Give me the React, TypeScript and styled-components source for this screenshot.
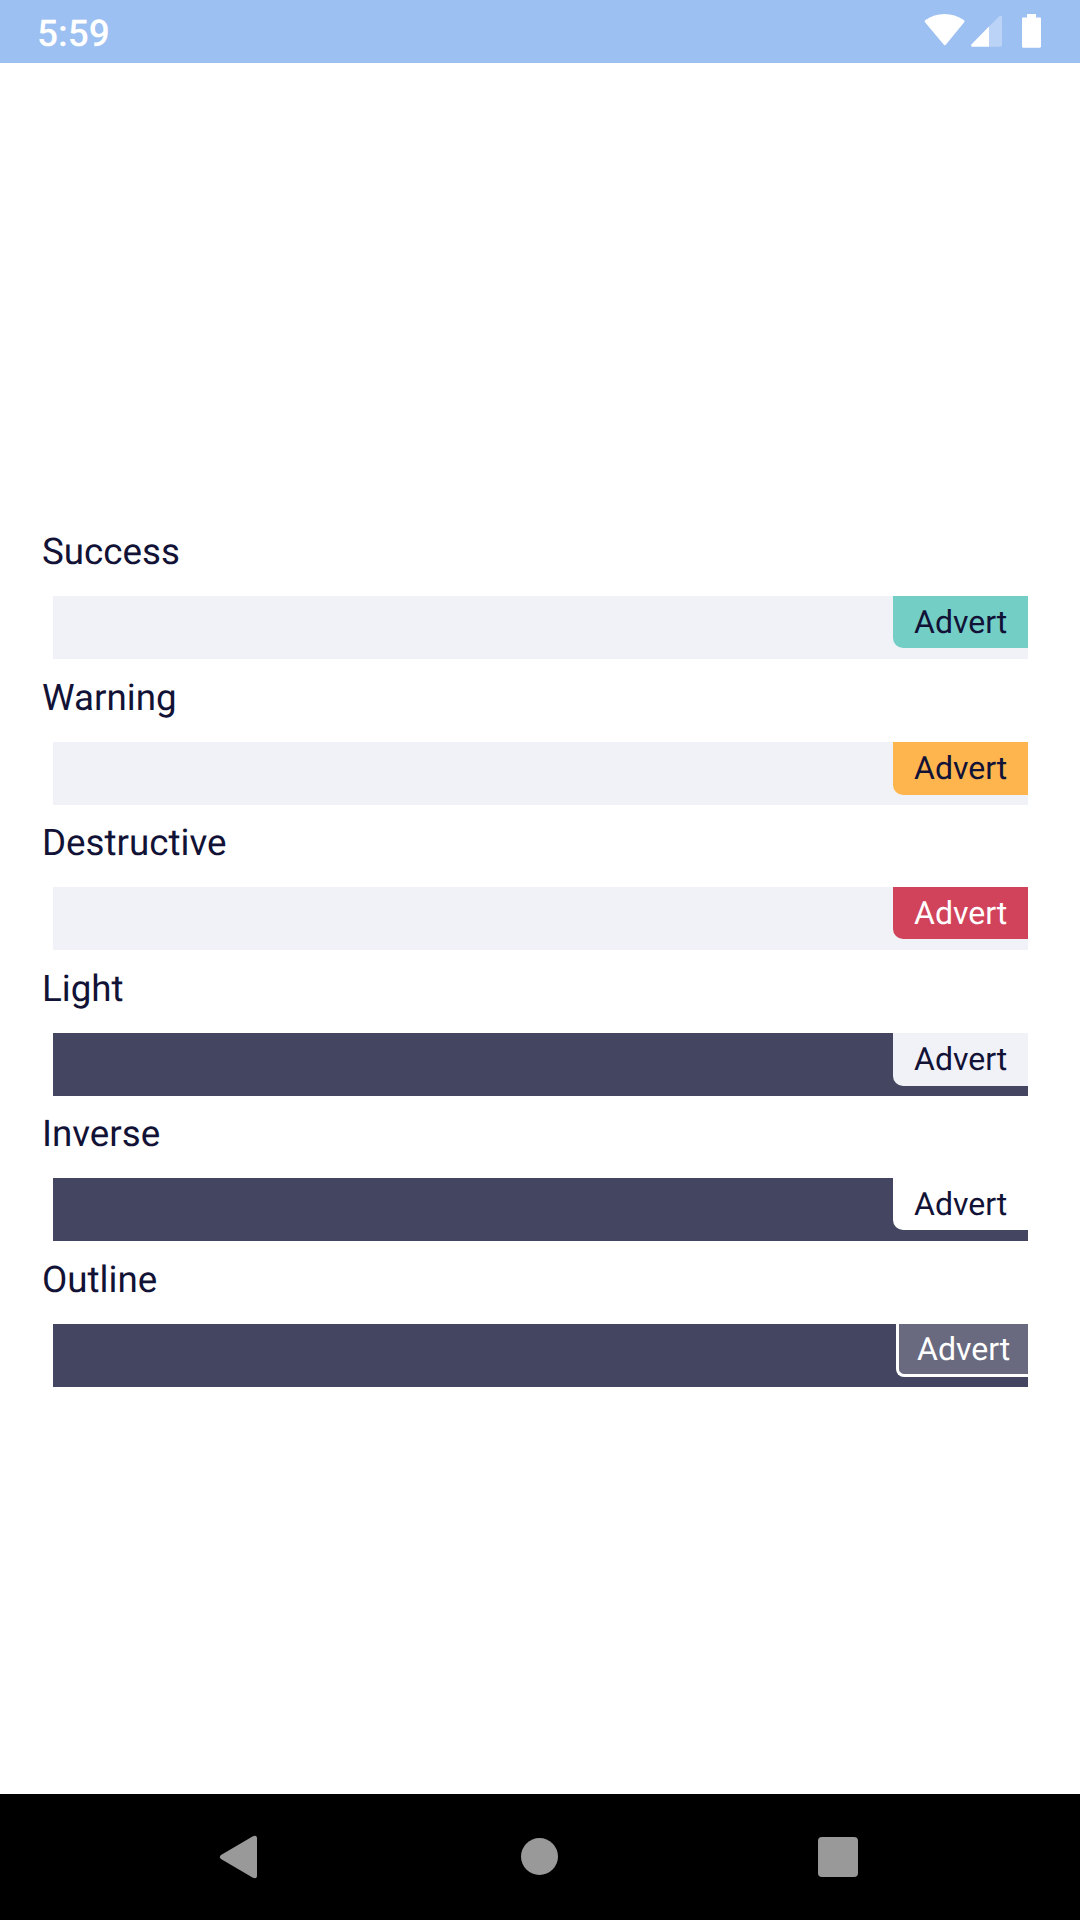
import React from "react";
import styled, { createGlobalStyle } from "styled-components";

const GlobalStyle = createGlobalStyle`
  * { box-sizing: border-box; }
  body { margin: 0; background: #fff; }
`;

const Screen = styled.div`
  display: flex;
  flex-direction: column;
  width: 1080px;
  height: 1920px;
  background: #fff;
  font-family: Roboto, sans-serif;
  text-rendering: geometricPrecision;
  color: #111236;
`;

const StatusBar = styled.header`
  display: flex;
  align-items: center;
  justify-content: space-between;
  flex: none;
  height: 63px;
  padding: 4px 38px 0 37px;
  background: #9dc0f2;
  color: #fff;
`;

const Clock = styled.time`
  margin-top: 2px;
  font-size: 37px;
  line-height: 43px;
  font-weight: 500;
`;

const StatusIcons = styled.svg`
  display: block;
  flex: none;
  margin-top: -5px;
`;

const Content = styled.main`
  display: flex;
  flex-direction: column;
  flex: 1;
  padding: 467px 42px 0;
`;

const Section = styled.section<{ $gap: number }>`
  display: flex;
  flex-direction: column;
  height: ${(p) => p.$gap}px;
`;

const Label = styled.h2`
  margin: 0 0 23px;
  font-size: 36.75px;
  line-height: 43px;
  font-weight: 400;
`;

const Bar = styled.div<{ $color: string }>`
  display: flex;
  justify-content: flex-end;
  align-items: flex-start;
  height: 63px;
  margin: 0 10px 0 11px;
  background: ${(p) => p.$color};
`;

const Badge = styled.span<{ $bg: string; $fg: string; $height: number; $outline?: boolean }>`
  display: flex;
  align-items: flex-start;
  height: ${(p) => p.$height}px;
  width: ${(p) => (p.$outline ? 132 : 135)}px;
  padding: ${(p) => (p.$outline ? "7px 0 0 18px" : "8px 0 0 21px")};
  border: 0 solid #fff;
  border-width: ${(p) => (p.$outline ? "0 0 3px 3px" : "0")};
  border-bottom-left-radius: ${(p) => (p.$outline ? 8 : 10)}px;
  background: ${(p) => p.$bg};
  background-clip: padding-box;
  color: ${(p) => p.$fg};
  font-size: 32px;
  line-height: 37px;
`;

const NavBar = styled.nav`
  flex: none;
  height: 126px;
  background: #000;
`;

const variants = [
  { name: "Success", bar: "#f1f2f8", bg: "#73cec6", fg: "#111236", gap: 146, height: 52 },
  { name: "Warning", bar: "#f1f2f8", bg: "#ffb54d", fg: "#111236", gap: 145, height: 53 },
  { name: "Destructive", bar: "#f1f2f8", bg: "#d1435b", fg: "#fff", gap: 146, height: 52 },
  { name: "Light", bar: "#444560", bg: "#f1f2f8", fg: "#111236", gap: 145, height: 53 },
  { name: "Inverse", bar: "#444560", bg: "#fff", fg: "#111236", gap: 146, height: 52 },
  { name: "Outline", bar: "#444560", bg: "rgba(255,255,255,0.2)", fg: "#fff", gap: 146, height: 53, outline: true },
];

export default function App() {
  return (
    <>
      <GlobalStyle />
      <Screen>
        <StatusBar>
          <Clock>5:59</Clock>
          <StatusIcons width="118" height="36" viewBox="0 0 118 36" fill="#fff">
            <path d="M21 32.4 Q20.3 32.4 19.7 31.6 L1 9.2 Q0 8 1.4 7 Q10 1 20.5 1 Q31 1 39.8 7 Q41.2 8 40.2 9.2 L22 31.6 Q21.4 32.4 21 32.4Z" />
            <path d="M65 13.5 L75.3 3.2 Q76 2.7 77 2.7 Q78 2.7 78 4 V32 Q78 33.7 76.5 33.7 H65Z" opacity="0.3" />
            <path d="M65 13.5 V33.7 H48 Q46.4 33 47.4 31.4Z" />
            <path d="M103 1 H112 V4.6 H116 Q117 4.6 117 5.6 V33.6 Q117 34.7 116 34.7 H99 Q98 34.7 98 33.6 V5.6 Q98 4.6 99 4.6 H103Z" />
          </StatusIcons>
        </StatusBar>
        <Content>
          {variants.map((v) => (
            <Section key={v.name} $gap={v.gap}>
              <Label>{v.name}</Label>
              <Bar $color={v.bar}>
                <Badge $bg={v.bg} $fg={v.fg} $height={v.height} $outline={v.outline}>
                  Advert
                </Badge>
              </Bar>
            </Section>
          ))}
        </Content>
        <NavBar>
          <svg width="1080" height="126" viewBox="0 0 1080 126" fill="#999">
            <path d="M252.5 42.4 Q257 40.4 257 44.5 V81.5 Q257 85.6 252.5 83.6 L221 65 Q218.6 63 221 61Z" />
            <circle cx="539.5" cy="62.5" r="18.5" />
            <rect x="818" y="43" width="40" height="40" rx="4" />
          </svg>
        </NavBar>
      </Screen>
    </>
  );
}
